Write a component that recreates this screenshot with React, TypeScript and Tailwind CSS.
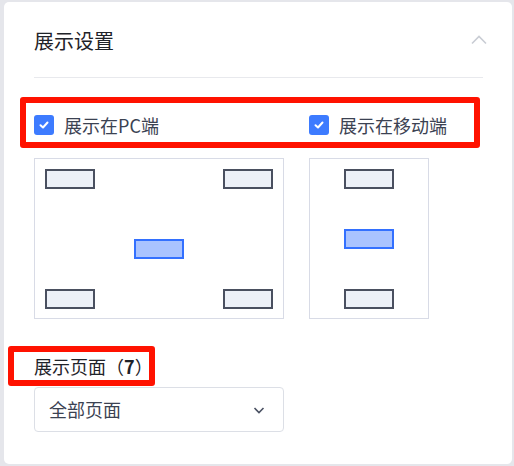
import React from "react";

const font = { fontFamily: '"Noto Sans CJK SC", "Noto Sans", sans-serif' };

const Slot: React.FC<{ active?: boolean }> = ({ active }) => (
  <div
    className={
      active
        ? "w-[50px] h-[20px] border-2 border-[#3370ff] bg-[#a9c3ff]"
        : "w-[50px] h-[20px] border-2 border-[#4a5060] bg-[#edf1f8]"
    }
  />
);

const Check: React.FC<{ label: string }> = ({ label }) => (
  <label className="flex items-center gap-[10px]">
    <span className="flex h-[20px] w-[20px] items-center justify-center rounded-[3px] bg-[#3d7bff]">
      <svg width="12" height="12" viewBox="0 0 12 12" fill="none">
        <path d="M2.5 6.2 L5 8.5 L9.5 3.5" stroke="#fff" strokeWidth="2" strokeLinecap="round" strokeLinejoin="round" />
      </svg>
    </span>
    <span className="text-[18px] leading-[22px] text-[#3b4252]">{label}</span>
  </label>
);

export default function App() {
  return (
    <div className="w-[514px] h-[466px] bg-[#e5e6eb] pt-[2px] pl-[4px] pr-[2px] pb-[2px]" style={font}>
      <div className="h-[462px] w-[508px] rounded-[5px] bg-white pl-[30px] pr-[29px] pt-[19px]">
        <div className="flex h-[40px] items-center justify-between">
          <span className="text-[20px] text-[#1f2329]">展示设置</span>
          <svg width="18" height="18" viewBox="0 0 18 18" className="-mr-[5px] -mt-[2px]" fill="none">
            <path d="M2 12.5 L9 5.5 L16 12.5" stroke="#c9cdd4" strokeWidth="1.6" />
          </svg>
        </div>
        <div className="mt-[16px] h-px bg-[#e8e9ed]" />

        <div className="-ml-[14px] mt-[19px] w-[460px] rounded-[3px] border-[6px] border-[#ff1200] pl-[8px] pt-[11px] pb-[6px]">
          <div className="flex">
            <div className="w-[275px]">
              <Check label="展示在PC端" />
            </div>
            <Check label="展示在移动端" />
          </div>
        </div>

        <div className="mt-[10px] flex gap-[25px]">
          <div className="flex h-[161px] w-[250px] flex-col border border-[#d8dbe6] px-[10px] pt-[10px]">
            <div className="flex justify-between">
              <Slot />
              <Slot />
            </div>
            <div className="mt-[50px] flex justify-center">
              <Slot active />
            </div>
            <div className="mt-[30px] flex justify-between">
              <Slot />
              <Slot />
            </div>
          </div>
          <div className="flex h-[161px] w-[120px] flex-col items-center border border-[#d8dbe6] pt-[10px]">
            <Slot />
            <div className="mt-[40px]">
              <Slot active />
            </div>
            <div className="mt-[40px]">
              <Slot />
            </div>
          </div>
        </div>

        <div className="-ml-[26px] mt-[27px] w-[147px] rounded-[3px] border-[6px] border-[#ff1200] pl-[20px]">
          <div className="h-[28px] whitespace-nowrap text-[18px] leading-[28px] text-[#1f2329]">
            展示页面（<span className="font-bold">7</span>）
          </div>
        </div>

        <div className="mt-px flex h-[45px] w-[250px] items-center justify-between rounded-[4px] border border-[#dcdfe6] pl-[14px] pr-[18px]">
          <span className="text-[18px] text-[#3b4252]">全部页面</span>
          <svg width="12" height="12" viewBox="0 0 12 12" fill="none">
            <path d="M1.5 4 L6 8.5 L10.5 4" stroke="#4b5263" strokeWidth="1.6" />
          </svg>
        </div>
      </div>
    </div>
  );
}
